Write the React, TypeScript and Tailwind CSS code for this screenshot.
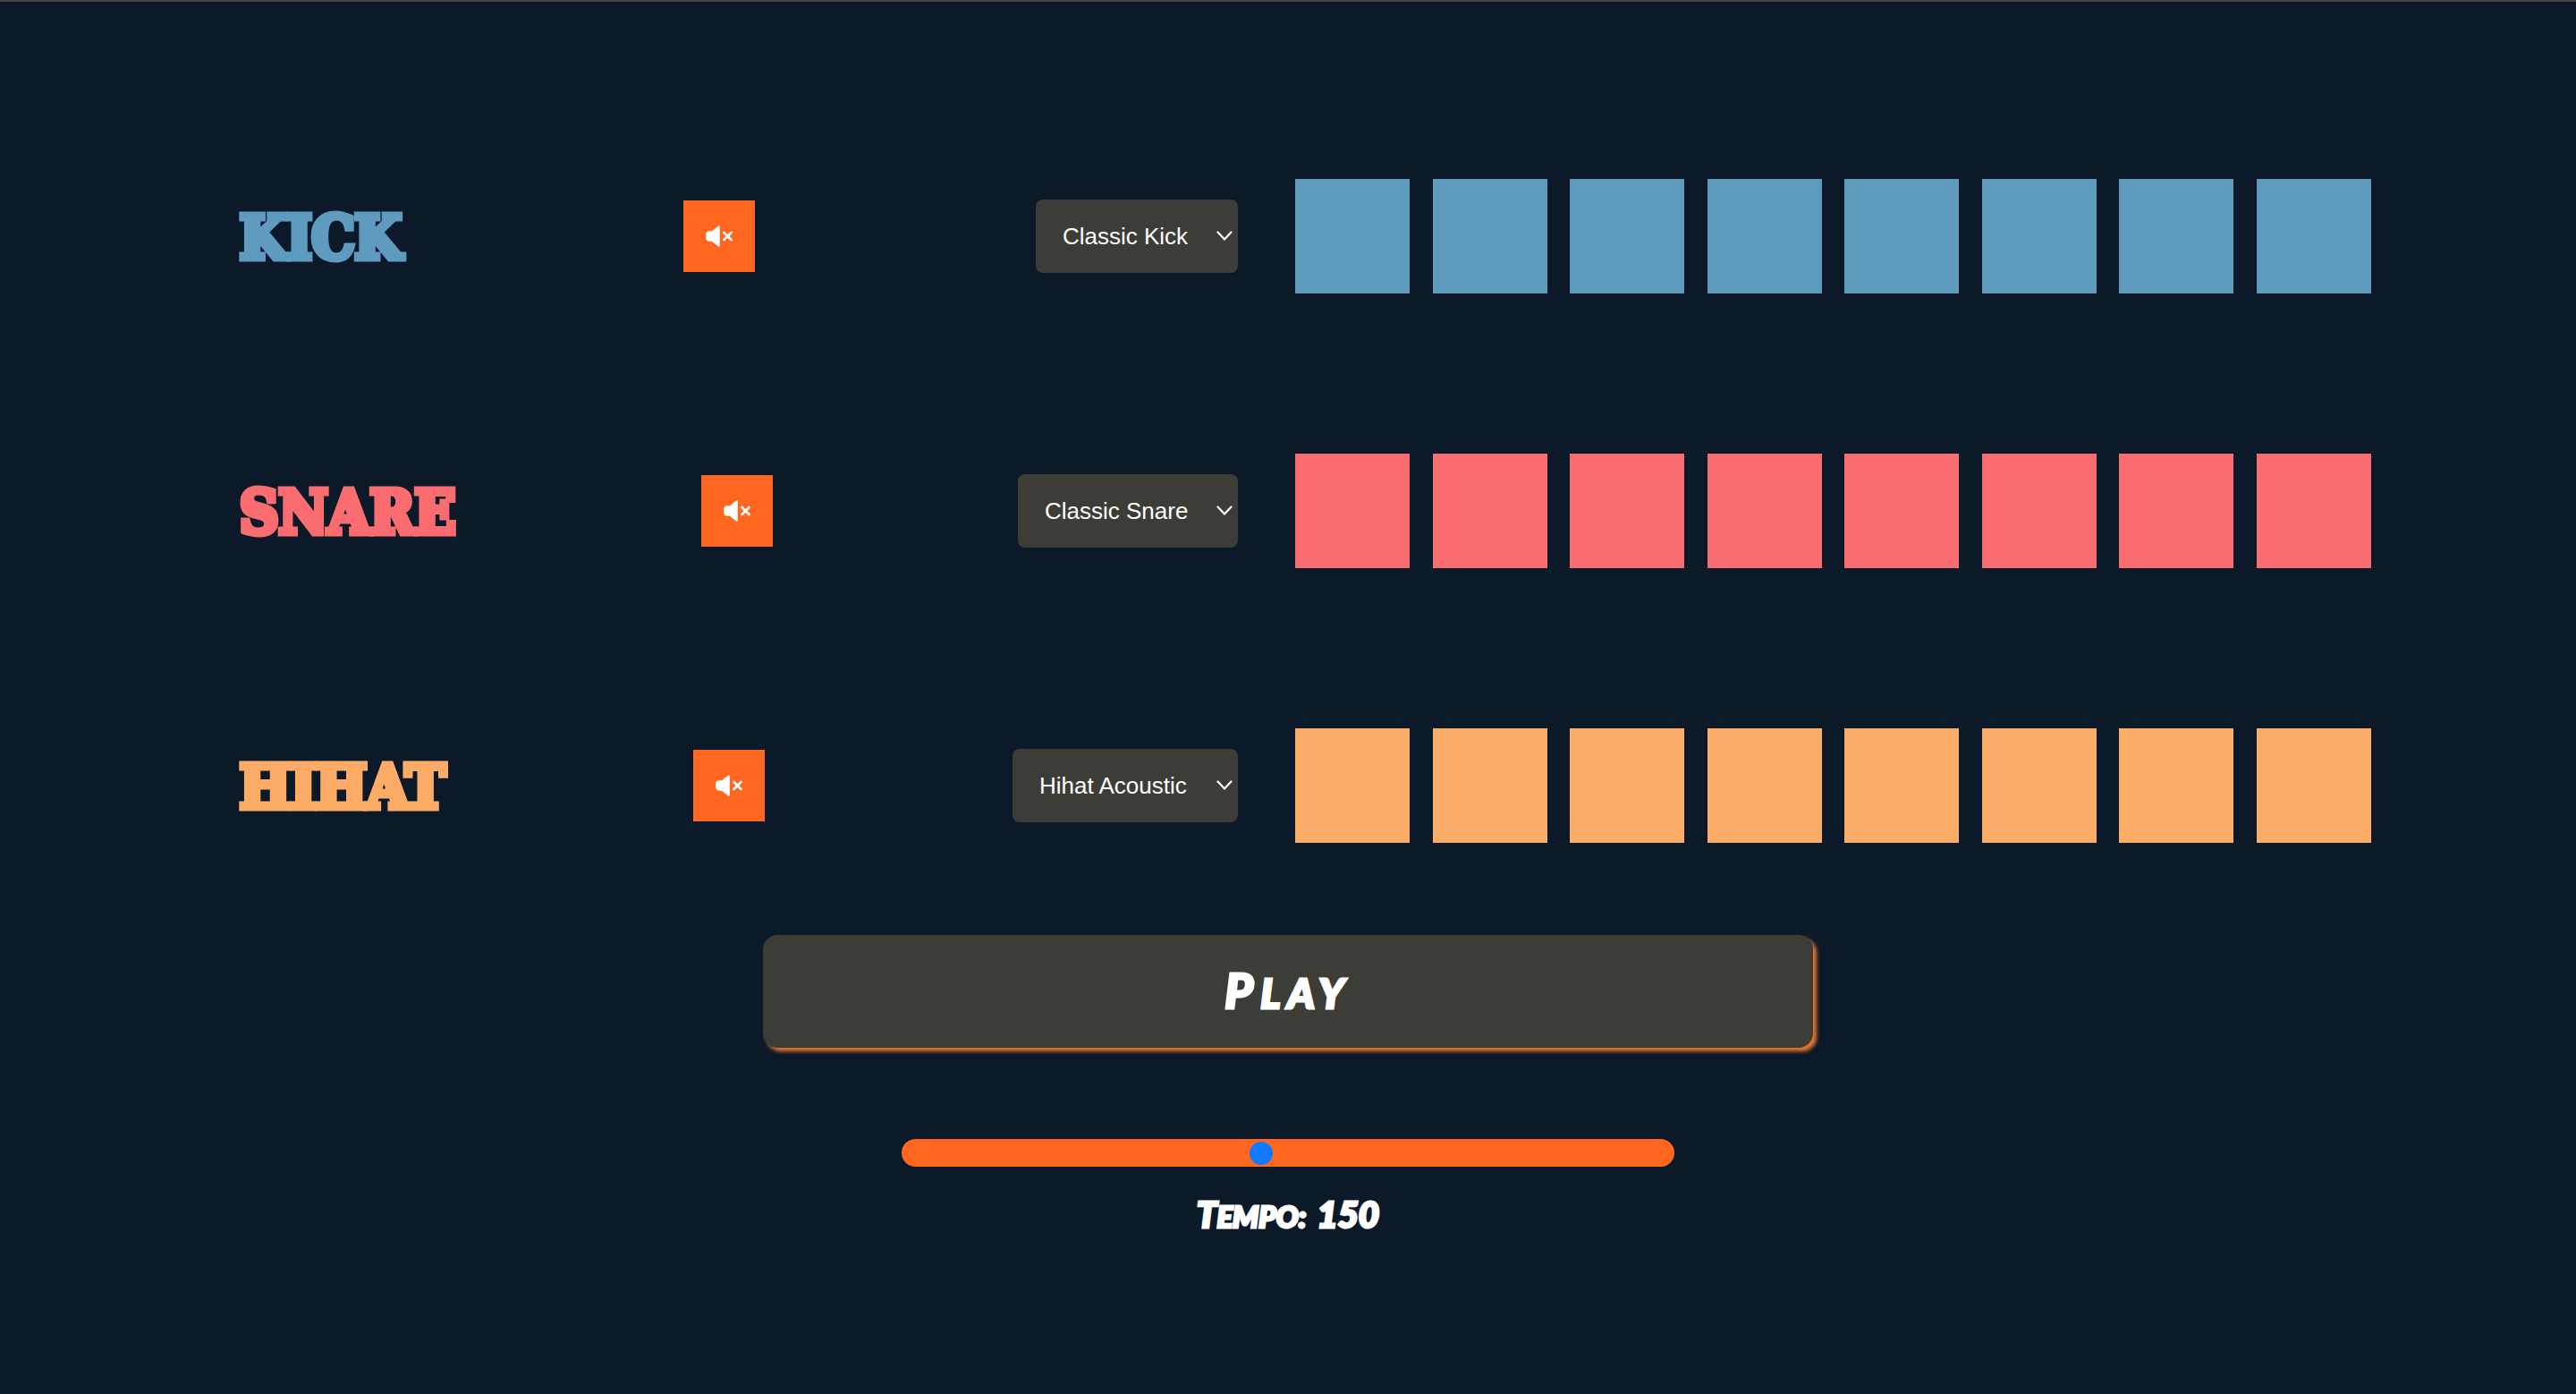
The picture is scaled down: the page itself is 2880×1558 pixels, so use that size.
import { useState } from "react";

type Track = {
  id: string;
  name: string;
  text: string;
  pad: string;
  sounds: string[];
};

const tracks: Track[] = [
  {
    id: "kick",
    name: "KICK",
    text: "text-[#5f9abf]",
    pad: "bg-[#5f9abf]",
    sounds: ["Classic Kick"],
  },
  {
    id: "snare",
    name: "SNARE",
    text: "text-[#f96c6f]",
    pad: "bg-[#f96c6f]",
    sounds: ["Classic Snare"],
  },
  {
    id: "hihat",
    name: "HIHAT",
    text: "text-[#fdac68]",
    pad: "bg-[#fdac68]",
    sounds: ["Hihat Acoustic"],
  },
];

function MuteIcon() {
  return (
    <svg width="30" height="24" viewBox="0 0 30 24" fill="none" aria-hidden="true">
      <path
        d="M15 1v22L7.4 17H4.2A3.4 3.4 0 0 1 1 13.800V10.200A3.400 3.400 0 0 1 4.200 7H7.400Z"
        fill="white"
        stroke="white"
        strokeWidth="1.600"
        strokeLinejoin="round"
      />
      <path d="m20.500 8 8 8m0-8-8 8" stroke="white" strokeWidth="2.600" strokeLinecap="round" />
    </svg>
  );
}

function SoundSelect({ track }: { track: Track }) {
  return (
    <div className="relative">
      <select
        aria-label={`${track.name} sound`}
        className="block h-[82px] appearance-none rounded-lg bg-[#3d3d37] pr-[55px] pl-[30px] text-[26px] text-white"
      >
        {track.sounds.map((s) => (
          <option key={s}>{s}</option>
        ))}
      </select>
      <svg
        className="pointer-events-none absolute inset-y-0 right-[6px] my-auto"
        width="18"
        height="12"
        viewBox="0 0 18 12"
        fill="none"
        aria-hidden="true"
      >
        <path d="m1.500 1.500 7.500 8 7.500-8" stroke="white" strokeWidth="2.200" strokeLinecap="round" />
      </svg>
    </div>
  );
}

function TrackRow({ track }: { track: Track }) {
  return (
    <section className="flex items-center gap-16">
      <div className="flex flex-1 items-center justify-between">
        <h1
          className={`pt-1 font-['DejaVu_Serif_Condensed','DejaVu_Serif',serif] text-[67px] leading-[80px] font-bold [-webkit-text-stroke:7px_currentColor] ${track.text}`}
        >
          {track.name}
        </h1>
        <button
          aria-label={`Mute ${track.name}`}
          className="flex size-20 items-center justify-center bg-[#ff6720]"
        >
          <MuteIcon />
        </button>
        <SoundSelect track={track} />
      </div>
      <div className="flex w-[1203px] justify-between">
        {Array.from({ length: 8 }, (_, i) => (
          <button key={i} aria-label={`${track.name} step ${i + 1}`} className={`size-32 ${track.pad}`} />
        ))}
      </div>
    </section>
  );
}

export default function App() {
  const [tempo, setTempo] = useState(150);
  return (
    <main className="min-h-screen border-t-2 border-[#464646] bg-[#0c1929] font-['Liberation_Sans',Arial,sans-serif] text-white">
      <div className="flex flex-col gap-[179px] pt-[198px] pr-[229px] pl-[268px]">
        {tracks.map((t) => (
          <TrackRow key={t.id} track={t} />
        ))}
      </div>
      <div className="mt-[103px] flex flex-col items-center font-['Lato',sans-serif] font-black italic [-webkit-text-stroke:3px_currentColor]">
        <button className="h-[126px] w-[1174px] max-w-full rounded-2xl bg-[#3d3d37] text-[46px] leading-[64px] tracking-[8px] shadow-[4px_4px_4px_#e6782d]">
          <span className="inline-block uppercase first-letter:text-[54px]">Play</span>
        </button>
        <input
          id="tempo"
          type="range"
          min={20}
          max={300}
          value={tempo}
          onChange={(e) => setTempo(Number(e.target.value))}
          className="mt-[102px] h-[31px] w-[30%] appearance-none rounded-full bg-[#ff6720] [&::-webkit-slider-thumb]:size-[26px] [&::-webkit-slider-thumb]:appearance-none [&::-webkit-slider-thumb]:rounded-full [&::-webkit-slider-thumb]:bg-[#147aff]"
        />
        <div className="mt-7 flex items-baseline gap-3 leading-[50px]">
          <label htmlFor="tempo" className="inline-block text-[33px] uppercase first-letter:text-[40px]">
            Tempo:
          </label>
          <output htmlFor="tempo" className="text-[40px]">
            {tempo}
          </output>
        </div>
      </div>
    </main>
  );
}
